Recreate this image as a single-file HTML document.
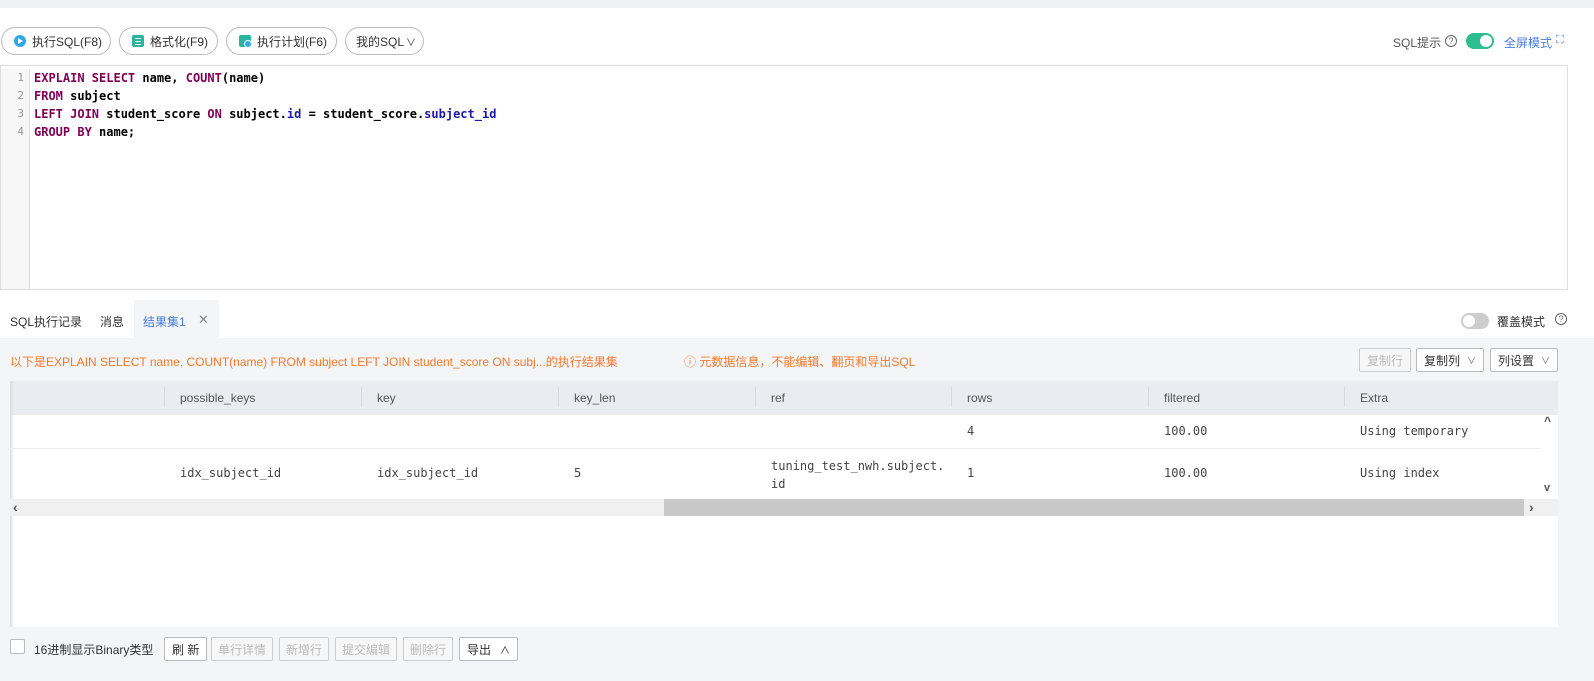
<!DOCTYPE html>
<html><head><meta charset="utf-8"><style>
*{box-sizing:border-box;margin:0;padding:0}
body{width:1594px;height:681px;background:#fff;font-family:"Liberation Sans","Noto Sans CJK SC",sans-serif;font-size:12px;color:#333;position:relative;overflow:hidden;white-space:nowrap}
.a{position:absolute}
.pill{position:absolute;top:27px;height:28px;border:1px solid #bbb;border-radius:14px;display:flex;align-items:center;padding-left:12px;font-size:12px;color:#333}
.pill i{display:inline-block;width:12px;height:12px;margin-right:6px}
.mono{font-family:"DejaVu Sans Mono","Liberation Mono",monospace}
.code div{height:18px;line-height:18px;font-size:12px;font-weight:bold;color:#000}
.k{color:#7f0055}.b{color:#1a1aa6}
.ln div{height:18px;line-height:18px;font-size:11px;color:#999;text-align:right;padding-right:5px}
.btn{position:absolute;height:24px;border:1px solid #bbb;border-radius:2px;background:#fff;font-size:12px;display:flex;align-items:center;padding:0 8px;color:#333;white-space:nowrap}
.dis{color:#bbb;border-color:#ccc;background:#f7f7f7}
.th{position:absolute;top:381px;height:34px;line-height:34px;font-size:12px;color:#555}
.sep{position:absolute;top:387px;width:1px;height:20px;background:#d8dbe0}
.td{position:absolute;font-size:12px;color:#444}
</style></head><body>
<div class="a" style="left:0;top:0;width:1594px;height:8px;background:#eef0f3"></div>

<div class="pill" style="left:1px;width:110px"><i style="border-radius:50%;background:#2fa8e6;position:relative"><b style="position:absolute;left:4px;top:3px;border-left:5px solid #fff;border-top:3px solid transparent;border-bottom:3px solid transparent"></b></i>执行SQL(F8)</div>
<div class="pill" style="left:119px;width:99px"><i style="background:#2bb5a0;border-radius:2px;position:relative"><b style="position:absolute;left:3px;top:3px;width:6px;height:1px;background:#fff;box-shadow:0 3px #fff,0 6px #fff"></b></i>格式化(F9)</div>
<div class="pill" style="left:226px;width:111px"><i style="background:#2bb5a0;border-radius:2px;position:relative"><b style="position:absolute;left:5px;top:5px;width:8px;height:8px;border-radius:50%;background:#2fa8e6;border:1px solid #fff"></b></i>执行计划(F6)</div>
<div class="pill" style="left:345px;width:79px;padding-left:10px">我的SQL<span style="font-size:10px;margin-left:2px">∨</span></div>

<div class="a" style="left:1393px;top:34px;font-size:12px;color:#555">SQL提示</div>
<div class="a" style="left:1445px;top:35px;width:12px;height:12px;border:1px solid #666;border-radius:50%;font-size:9px;line-height:10px;text-align:center;color:#666">?</div>
<div class="a" style="left:1466px;top:33px;width:28px;height:16px;border-radius:8px;background:#2ebd8f"><div class="a" style="left:14px;top:2px;width:12px;height:12px;border-radius:50%;background:#fff"></div></div>
<div class="a" style="left:1504px;top:34px;font-size:12px;color:#4a7be0">全屏模式</div>
<div class="a" style="left:1556px;top:34px;font-size:11px;color:#4a7be0">⛶</div>

<div class="a" style="left:0;top:65px;width:1568px;height:225px;border:1px solid #ddd"></div>
<div class="a ln mono" style="left:1px;top:69px;width:29px;height:220px;background:#f7f7f7;border-right:1px solid #ddd">
<div>1</div><div>2</div><div>3</div><div>4</div></div>
<div class="a code mono" style="left:34px;top:69px">
<div><span class="k">EXPLAIN SELECT</span> name, <span class="k">COUNT</span>(name)</div>
<div><span class="k">FROM</span> subject</div>
<div><span class="k">LEFT JOIN</span> student_score <span class="k">ON</span> subject.<span class="b">id</span> = student_score.<span class="b">subject_id</span></div>
<div><span class="k">GROUP BY</span> name;</div>
</div>

<div class="a" style="left:10px;top:313px;font-size:12px;color:#333">SQL执行记录</div>
<div class="a" style="left:100px;top:313px;font-size:12px;color:#333">消息</div>
<div class="a" style="left:134px;top:300px;width:85px;height:38px;background:#f4f5f7"></div>
<div class="a" style="left:143px;top:313px;font-size:12px;color:#4a7be0">结果集1</div>
<div class="a" style="left:198px;top:312px;font-size:13px;color:#888">✕</div>
<div class="a" style="left:1461px;top:313px;width:28px;height:16px;border-radius:8px;background:#ccc"><div class="a" style="left:2px;top:2px;width:12px;height:12px;border-radius:50%;background:#fff"></div></div>
<div class="a" style="left:1497px;top:313px;font-size:12px;color:#333">覆盖模式</div>
<div class="a" style="left:1555px;top:313px;width:12px;height:12px;border:1px solid #666;border-radius:50%;font-size:9px;line-height:10px;text-align:center;color:#666">?</div>

<div class="a" style="left:0;top:338px;width:1594px;height:343px;background:#f4f5f7"></div>
<div class="a" style="left:10px;top:353px;font-size:12px;color:#f5782d">以下是EXPLAIN SELECT name, COUNT(name) FROM subject LEFT JOIN student_score ON subj...的执行结果集</div>
<div class="a" style="left:684px;top:353px;font-size:12px;color:#f5782d">ⓘ 元数据信息，不能编辑、翻页和导出SQL</div>
<div class="btn dis" style="left:1359px;top:348px;padding:0 7px">复制行</div>
<div class="btn" style="left:1416px;top:348px;width:68px;padding:0 7px">复制列<span style="margin-left:auto;font-size:9px;color:#666">∨</span></div>
<div class="btn" style="left:1490px;top:348px;width:68px;padding:0 7px">列设置<span style="margin-left:auto;font-size:9px;color:#666">∨</span></div>

<div class="a" style="left:10px;top:381px;width:1548px;height:246px;background:#fff"></div>
<div class="a" style="left:10px;top:381px;width:1548px;height:34px;background:#e9ecf0"></div>
<div class="a" style="left:10px;top:381px;width:4px;height:246px;background:linear-gradient(90deg,#ddd,transparent)"></div>
<div class="sep" style="left:164px"></div><div class="sep" style="left:361px"></div><div class="sep" style="left:558px"></div><div class="sep" style="left:755px"></div><div class="sep" style="left:951px"></div><div class="sep" style="left:1148px"></div><div class="sep" style="left:1344px"></div>
<div class="th" style="left:180px">possible_keys</div><div class="th" style="left:377px">key</div><div class="th" style="left:574px">key_len</div><div class="th" style="left:771px">ref</div><div class="th" style="left:967px">rows</div><div class="th" style="left:1164px">filtered</div><div class="th" style="left:1360px">Extra</div>
<div class="a" style="left:10px;top:448px;width:1531px;height:1px;background:#eceef1"></div>
<div class="td mono" style="left:967px;top:424px">4</div><div class="td mono" style="left:1164px;top:424px">100.00</div><div class="td mono" style="left:1360px;top:424px">Using temporary</div>
<div class="td mono" style="left:180px;top:466px">idx_subject_id</div><div class="td mono" style="left:377px;top:466px">idx_subject_id</div><div class="td mono" style="left:574px;top:466px">5</div>
<div class="td mono" style="left:771px;top:457px;line-height:18px">tuning_test_nwh.subject.<br>id</div>
<div class="td mono" style="left:967px;top:466px">1</div><div class="td mono" style="left:1164px;top:466px">100.00</div><div class="td mono" style="left:1360px;top:466px">Using index</div>
<div class="a" style="left:1541px;top:415px;width:17px;height:84px;background:#fff"></div>
<div class="a" style="left:1544px;top:414px;font-size:12px;color:#555;font-weight:bold">^</div>
<div class="a" style="left:1544px;top:482px;font-size:11px;color:#555;font-weight:bold">v</div>
<div class="a" style="left:10px;top:499px;width:1548px;height:17px;background:#f0f0f0"></div>
<div class="a" style="left:664px;top:499px;width:860px;height:17px;background:#c8c8c8"></div>
<div class="a" style="left:13px;top:499px;font-size:14px;color:#555;font-weight:bold">‹</div>
<div class="a" style="left:1529px;top:499px;font-size:14px;color:#555;font-weight:bold">›</div>

<div class="a" style="left:10px;top:639px;width:15px;height:15px;border:1px solid #bbb;background:#fff;border-radius:2px"></div>
<div class="a" style="left:34px;top:641px;font-size:12px;color:#333">16进制显示Binary类型</div>
<div class="btn" style="left:164px;top:637px;padding:0 7px">刷 新</div>
<div class="btn dis" style="left:211px;top:637px;padding:0 6px">单行详情</div>
<div class="btn dis" style="left:279px;top:637px;padding:0 6px">新增行</div>
<div class="btn dis" style="left:335px;top:637px;padding:0 6px">提交编辑</div>
<div class="btn dis" style="left:403px;top:637px;padding:0 6px">删除行</div>
<div class="btn" style="left:459px;top:637px;width:59px;padding:0 7px">导出<span style="margin-left:auto;font-size:10px">∧</span></div>
</body></html>
